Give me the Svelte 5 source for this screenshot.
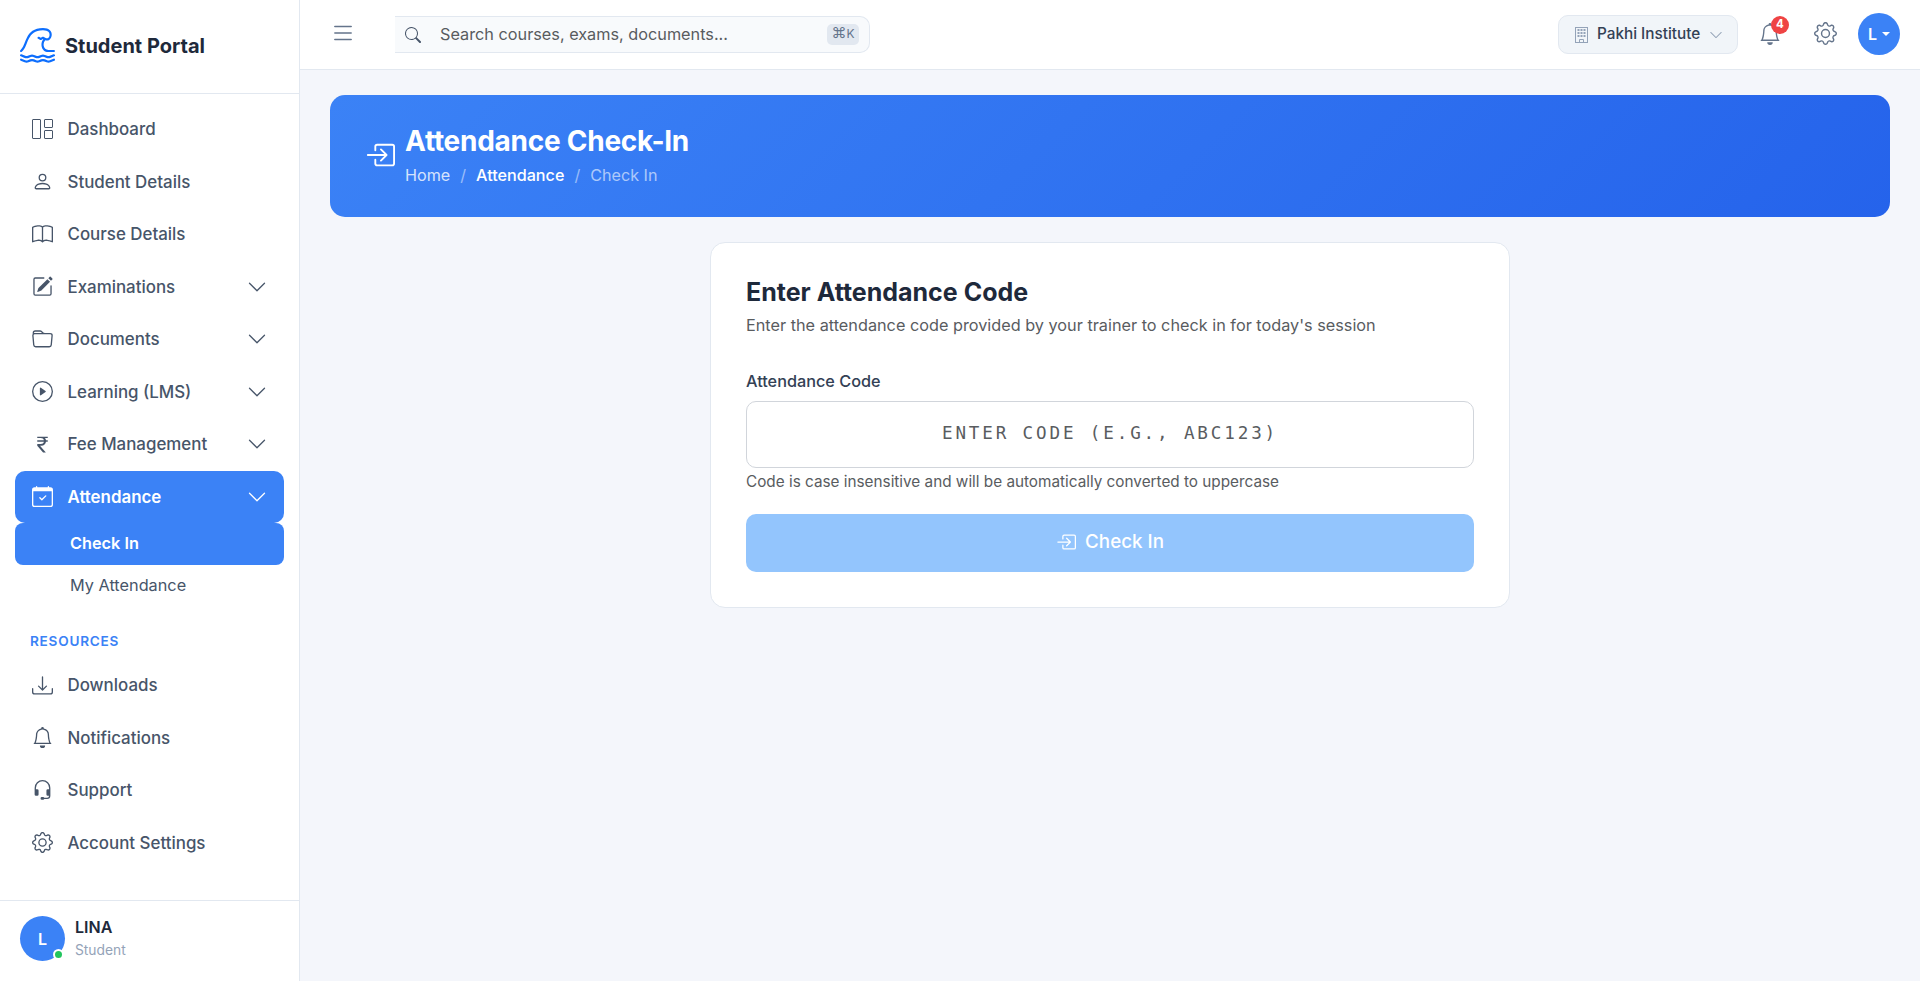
<script>
  const icons = {
    tsunami:
      "M.036 12.314a.5.5 0 0 1 .65-.278l1.757.703a1.5 1.5 0 0 0 1.114 0l1.014-.406a2.5 2.5 0 0 1 1.857 0l1.015.406a1.5 1.5 0 0 0 1.114 0l1.014-.406a2.5 2.5 0 0 1 1.857 0l1.015.406a1.5 1.5 0 0 0 1.114 0l1.757-.703a.5.5 0 1 1 .372.928l-1.758.703a2.5 2.5 0 0 1-1.857 0l-1.014-.406a1.5 1.5 0 0 0-1.114 0l-1.015.406a2.5 2.5 0 0 1-1.857 0l-1.014-.406a1.5 1.5 0 0 0-1.114 0l-1.015.406a2.5 2.5 0 0 1-1.857 0l-1.757-.703a.5.5 0 0 1-.278-.65m0 2a.5.5 0 0 1 .65-.278l1.757.703a1.5 1.5 0 0 0 1.114 0l1.014-.406a2.5 2.5 0 0 1 1.857 0l1.015.406a1.5 1.5 0 0 0 1.114 0l1.014-.406a2.5 2.5 0 0 1 1.857 0l1.015.406a1.5 1.5 0 0 0 1.114 0l1.757-.703a.5.5 0 1 1 .372.928l-1.758.703a2.5 2.5 0 0 1-1.857 0l-1.014-.406a1.5 1.5 0 0 0-1.114 0l-1.015.406a2.5 2.5 0 0 1-1.857 0l-1.014-.406a1.5 1.5 0 0 0-1.114 0l-1.015.406a2.5 2.5 0 0 1-1.857 0l-1.757-.703a.5.5 0 0 1-.278-.65M2.662 8.08c-.456 1.063-.994 2.098-1.842 2.804a.5.5 0 0 1-.64-.768c.652-.544 1.114-1.384 1.564-2.43.14-.328.281-.68.427-1.044.302-.754.624-1.559 1.01-2.308C3.763 3.2 4.528 2.105 5.7 1.299 6.877.49 8.418 0 10.5 0c1.463 0 2.511.4 3.179 1.058.67.66.893 1.518.819 2.302-.074.771-.441 1.516-1.02 1.965a1.88 1.88 0 0 1-1.904.27c-.65.642-.907 1.679-.71 2.614C11.076 9.215 11.784 10 13 10h2.5a.5.5 0 0 1 0 1H13c-1.784 0-2.826-1.215-3.114-2.585-.232-1.1.005-2.373.758-3.284L10.5 5.06l-.777.388a.5.5 0 0 1-.447 0l-1-.5a.5.5 0 0 1 .447-.894l.777.388.776-.388a.5.5 0 0 1 .447 0l1 .5.034.018c.44.264.81.195 1.108-.036.328-.255.586-.729.637-1.27.05-.529-.1-1.076-.525-1.495s-1.19-.77-2.477-.77c-1.918 0-3.252.448-4.232 1.123C5.283 2.8 4.61 3.738 4.07 4.79c-.365.71-.655 1.433-.945 2.16-.15.376-.301.753-.463 1.13",
    person:
      "M8 8a3 3 0 1 0 0-6 3 3 0 0 0 0 6m2-3a2 2 0 1 1-4 0 2 2 0 0 1 4 0m4 8c0 1-1 1-1 1H3s-1 0-1-1 1-4 6-4 6 3 6 4m-1-.004c-.001-.246-.154-.986-.832-1.664C11.516 10.68 10.289 10 8 10s-3.516.68-4.168 1.332c-.678.678-.83 1.418-.832 1.664z",
    book: "M1 2.828c.885-.37 2.154-.769 3.388-.893 1.33-.134 2.458.063 3.112.752v9.746c-.935-.53-2.12-.603-3.213-.493-1.18.12-2.37.461-3.287.811zm7.5-.141c.654-.689 1.782-.886 3.112-.752 1.234.124 2.503.523 3.388.893v9.923c-.918-.35-2.107-.692-3.287-.81-1.094-.111-2.278-.039-3.213.492zM8 1.783C7.015.936 5.587.81 4.287.94c-1.514.153-3.042.672-3.994 1.105A.5.5 0 0 0 0 2.5v11a.5.5 0 0 0 .707.455c.882-.4 2.303-.881 3.68-1.02 1.409-.142 2.59.087 3.223.877a.5.5 0 0 0 .78 0c.633-.79 1.814-1.019 3.222-.877 1.378.139 2.8.62 3.681 1.02A.5.5 0 0 0 16 13.5v-11a.5.5 0 0 0-.293-.455c-.952-.433-2.48-.952-3.994-1.105C10.413.809 8.985.936 8 1.783",
    pencil:
      "M15.502 1.94a.5.5 0 0 1 0 .706L14.459 3.69l-2-2L13.502.646a.5.5 0 0 1 .707 0l1.293 1.293zm-1.75 2.456-2-2L4.939 9.21a.5.5 0 0 0-.121.196l-.805 2.414a.25.25 0 0 0 .316.316l2.414-.805a.5.5 0 0 0 .196-.12l6.813-6.814zM1 13.5A1.5 1.5 0 0 0 2.5 15h11a1.5 1.5 0 0 0 1.5-1.5v-6a.5.5 0 0 0-1 0v6a.5.5 0 0 1-.5.5h-11a.5.5 0 0 1-.5-.5v-11a.5.5 0 0 1 .5-.5H9a.5.5 0 0 0 0-1H2.5A1.5 1.5 0 0 0 1 2.5z",
    folder:
      "M.54 3.87.5 3a2 2 0 0 1 2-2h3.672a2 2 0 0 1 1.414.586l.828.828A2 2 0 0 0 9.828 3h3.982a2 2 0 0 1 1.992 2.181l-.637 7A2 2 0 0 1 13.174 14H2.826a2 2 0 0 1-1.991-1.819l-.637-7a2 2 0 0 1 .342-1.31zM2.19 4a1 1 0 0 0-.996 1.09l.637 7a1 1 0 0 0 .995.91h10.348a1 1 0 0 0 .995-.91l.637-7A1 1 0 0 0 13.81 4zm4.69-1.707A1 1 0 0 0 6.172 2H2.5a1 1 0 0 0-1 .981l.006.139q.323-.119.684-.12h5.396z",
    play: "M8 15A7 7 0 1 1 8 1a7 7 0 0 1 0 14m0 1A8 8 0 1 0 8 0a8 8 0 0 0 0 16M6.271 5.055a.5.5 0 0 1 .52.038l3.5 2.5a.5.5 0 0 1 0 .814l-3.5 2.5A.5.5 0 0 1 6 10.5v-5a.5.5 0 0 1 .271-.445",
    rupee:
      "M4 3.06h2.726c1.22 0 2.12.575 2.325 1.724H4v1.051h5.051C8.855 7.001 8 7.558 6.788 7.558H4v1.317L8.437 14h2.11L6.095 8.884h.855c2.316-.018 3.465-1.476 3.688-3.049H12V4.784h-1.345c-.08-.778-.357-1.335-.793-1.732H12V2H4z",
    calendar:
      "M10.854 7.146a.5.5 0 0 1 0 .708l-3 3a.5.5 0 0 1-.708 0l-1.5-1.5a.5.5 0 1 1 .708-.708L7.5 9.793l2.646-2.647a.5.5 0 0 1 .708 0M3.5 0a.5.5 0 0 1 .5.5V1h8V.5a.5.5 0 0 1 1 0V1h1a2 2 0 0 1 2 2v11a2 2 0 0 1-2 2H2a2 2 0 0 1-2-2V3a2 2 0 0 1 2-2h1V.5a.5.5 0 0 1 .5-.5M1 4v10a1 1 0 0 0 1 1h12a1 1 0 0 0 1-1V4z",
    download:
      "M.5 9.9a.5.5 0 0 1 .5.5v2.5a1 1 0 0 0 1 1h12a1 1 0 0 0 1-1v-2.5a.5.5 0 0 1 1 0v2.5a2 2 0 0 1-2 2H2a2 2 0 0 1-2-2v-2.5a.5.5 0 0 1 .5-.5M7.646 11.854a.5.5 0 0 0 .708 0l3-3a.5.5 0 0 0-.708-.708L8.5 10.293V1.5a.5.5 0 0 0-1 0v8.793L5.354 8.146a.5.5 0 1 0-.708.708z",
    bell: "M8 16a2 2 0 0 0 2-2H6a2 2 0 0 0 2 2M8 1.918l-.797.161A4 4 0 0 0 4 6c0 .628-.134 2.197-.459 3.742-.16.767-.376 1.566-.663 2.258h10.244c-.287-.692-.502-1.49-.663-2.258C12.134 8.197 12 6.628 12 6a4 4 0 0 0-3.203-3.92zM14.22 12c.223.447.481.801.78 1H1c.299-.199.557-.553.78-1C2.68 10.2 3 6.88 3 6c0-2.42 1.72-4.44 4.005-4.901a1 1 0 1 1 1.99 0A5 5 0 0 1 13 6c0 .88.32 4.2 1.22 6",
    headset:
      "M8 1a5 5 0 0 0-5 5v1h1a1 1 0 0 1 1 1v3a1 1 0 0 1-1 1H3a1 1 0 0 1-1-1V6a6 6 0 1 1 12 0v6a2.5 2.5 0 0 1-2.5 2.5H9.366a1 1 0 0 1-.866.5h-1a1 1 0 1 1 0-2h1a1 1 0 0 1 .866.5H11.5A1.5 1.5 0 0 0 13 12h-1a1 1 0 0 1-1-1V8a1 1 0 0 1 1-1h1V6a5 5 0 0 0-5-5",
    gear: "M8 4.754a3.246 3.246 0 1 0 0 6.492 3.246 3.246 0 0 0 0-6.492M5.754 8a2.246 2.246 0 1 1 4.492 0 2.246 2.246 0 0 1-4.492 0M9.796 1.343c-.527-1.79-3.065-1.79-3.592 0l-.094.319a.873.873 0 0 1-1.255.52l-.292-.16c-1.64-.892-3.433.902-2.54 2.541l.159.292a.873.873 0 0 1-.52 1.255l-.319.094c-1.79.527-1.79 3.065 0 3.592l.319.094a.873.873 0 0 1 .52 1.255l-.16.292c-.892 1.64.901 3.434 2.541 2.54l.292-.159a.873.873 0 0 1 1.255.52l.094.319c.527 1.79 3.065 1.79 3.592 0l.094-.319a.873.873 0 0 1 1.255-.52l.292.16c1.64.893 3.434-.902 2.54-2.541l-.159-.292a.873.873 0 0 1 .52-1.255l.319-.094c1.79-.527 1.79-3.065 0-3.592l-.319-.094a.873.873 0 0 1-.52-1.255l.16-.292c.893-1.64-.902-3.433-2.541-2.54l-.292.159a.873.873 0 0 1-1.255-.52zm-2.633.283c.246-.835 1.428-.835 1.674 0l.094.319a1.873 1.873 0 0 0 2.693 1.115l.291-.16c.764-.415 1.6.42 1.184 1.185l-.159.292a1.873 1.873 0 0 0 1.116 2.692l.318.094c.835.246.835 1.428 0 1.674l-.319.094a1.873 1.873 0 0 0-1.115 2.693l.16.291c.415.764-.42 1.6-1.185 1.184l-.291-.159a1.873 1.873 0 0 0-2.693 1.116l-.094.318c-.246.835-1.428.835-1.674 0l-.094-.319a1.873 1.873 0 0 0-2.692-1.115l-.292.16c-.764.415-1.6-.42-1.184-1.185l.159-.291A1.873 1.873 0 0 0 1.945 8.93l-.319-.094c-.835-.246-.835-1.428 0-1.674l.319-.094A1.873 1.873 0 0 0 3.06 4.377l-.16-.292c-.415-.764.42-1.6 1.185-1.184l.292.159a1.873 1.873 0 0 0 2.692-1.115z",
    chevron:
      "M1.646 4.646a.5.5 0 0 1 .708 0L8 10.293l5.646-5.647a.5.5 0 0 1 .708.708l-6 6a.5.5 0 0 1-.708 0l-6-6a.5.5 0 0 1 0-.708",
    list: "M2.5 12a.5.5 0 0 1 .5-.5h10a.5.5 0 0 1 0 1H3a.5.5 0 0 1-.5-.5m0-4a.5.5 0 0 1 .5-.5h10a.5.5 0 0 1 0 1H3a.5.5 0 0 1-.5-.5m0-4a.5.5 0 0 1 .5-.5h10a.5.5 0 0 1 0 1H3a.5.5 0 0 1-.5-.5",
    search:
      "M11.742 10.344a6.5 6.5 0 1 0-1.397 1.398h-.001q.044.06.098.115l3.85 3.85a1 1 0 0 0 1.415-1.414l-3.85-3.85a1 1 0 0 0-.115-.1zM12 6.5a5.5 5.5 0 1 1-11 0 5.5 5.5 0 0 1 11 0",
    enter:
      "M6 3.5a.5.5 0 0 1 .5-.5h8a.5.5 0 0 1 .5.5v9a.5.5 0 0 1-.5.5h-8a.5.5 0 0 1-.5-.5v-2a.5.5 0 0 0-1 0v2A1.5 1.5 0 0 0 6.5 14h8a1.5 1.5 0 0 0 1.5-1.5v-9A1.5 1.5 0 0 0 14.5 2h-8A1.5 1.5 0 0 0 5 3.5v2a.5.5 0 0 0 1 0zM11.854 8.354a.5.5 0 0 0 0-.708l-3-3a.5.5 0 1 0-.708.708L10.293 7.5H1.5a.5.5 0 0 0 0 1h8.793l-2.147 2.146a.5.5 0 0 0 .708.708z",
  };

  const mainLinks = [
    { label: "Dashboard", icon: "dashboard" },
    { label: "Student Details", icon: "person" },
    { label: "Course Details", icon: "book" },
    { label: "Examinations", icon: "pencil", expandable: true },
    { label: "Documents", icon: "folder", expandable: true },
    { label: "Learning (LMS)", icon: "play", expandable: true },
    { label: "Fee Management", icon: "rupee", expandable: true },
    { label: "Attendance", icon: "calendar", expandable: true, active: true },
  ];

  const resourceLinks = [
    { label: "Downloads", icon: "download" },
    { label: "Notifications", icon: "bell" },
    { label: "Support", icon: "headset" },
    { label: "Account Settings", icon: "gear" },
  ];

  let code = $state("");
</script>

{#snippet icon(name, size)}
  <svg width={size} height={size} viewBox="0 0 16 16" fill="currentColor" aria-hidden="true">
    <path d={icons[name]} />
  </svg>
{/snippet}

{#snippet navLink(link)}
  <button class="nav-link" class:active={link.active}>
    {#if link.icon == "dashboard"}
      <svg width="21" height="20" viewBox="0 0 21 20" fill="none" stroke="currentColor">
        <rect x="0.5" y="0.5" width="8" height="19" rx="0.5" />
        <rect x="12.5" y="0.5" width="8" height="8" rx="0.5" />
        <rect x="12.5" y="11.5" width="8" height="8" rx="0.5" />
      </svg>
    {:else}
      {@render icon(link.icon, 21)}
    {/if}
    <span>{link.label}</span>
    {#if link.expandable}
      <i class="arrow">{@render icon("chevron", 20)}</i>
    {/if}
  </button>
{/snippet}

<div class="layout">
  <aside class="sidebar">
    <div class="brand">
      {@render icon("tsunami", 35)}
      <span>Student Portal</span>
    </div>

    <nav>
      {#each mainLinks as link}
        {@render navLink(link)}
      {/each}
      <button class="sub-link active">Check In</button>
      <button class="sub-link">My Attendance</button>

      <div class="section">RESOURCES</div>
      {#each resourceLinks as link}
        {@render navLink(link)}
      {/each}
    </nav>

    <div class="profile">
      <div class="avatar">L<span class="status"></span></div>
      <div>
        <div class="name">LINA</div>
        <div class="role">Student</div>
      </div>
    </div>
  </aside>

  <div class="page">
    <header>
      <button class="icon-btn toggle" aria-label="Toggle menu">{@render icon("list", 26)}</button>
      <div class="search">
        {@render icon("search", 16)}
        <input type="text" placeholder="Search courses, exams, documents..." />
        <kbd><span>⌘</span>K</kbd>
      </div>
      <div class="actions">
        <button class="institute">
          <svg width="13" height="16" viewBox="0 0 13 16" fill="none" stroke="currentColor">
            <rect x="0.5" y="0.5" width="12" height="15" />
            <path d="M2.5 3h2m1 0h2m1 0h2M2.5 6h2m1 0h2m1 0h2M2.5 9h2m1 0h2m1 0h2" stroke-width="2" />
            <path d="M4.5 15.5v-3h4v3" />
          </svg>
          <span>Pakhi Institute</span>
          {@render icon("chevron", 14)}
        </button>
        <button class="icon-btn bell" aria-label="Notifications">
          {@render icon("bell", 22)}
          <span class="badge">4</span>
        </button>
        <button class="icon-btn gear" aria-label="Settings">{@render icon("gear", 23)}</button>
        <button class="user">L<span class="caret"></span></button>
      </div>
    </header>

    <main>
      <section class="banner">
        {@render icon("enter", 30)}
        <div>
          <h1>Attendance Check-In</h1>
          <div class="crumbs">
            <span class="home">Home</span>
            <span class="slash">/</span>
            <span class="parent">Attendance</span>
            <span class="slash">/</span>
            <span class="current">Check In</span>
          </div>
        </div>
      </section>

      <section class="card">
        <h2>Enter Attendance Code</h2>
        <p class="intro">Enter the attendance code provided by your trainer to check in for today's session</p>
        <label for="code">Attendance Code</label>
        <input id="code" type="text" placeholder="Enter code (e.g., ABC123)" bind:value={code} />
        <p class="hint">Code is case insensitive and will be automatically converted to uppercase</p>
        <button class="submit" disabled={!code}>
          {@render icon("enter", 20)}
          <span>Check In</span>
        </button>
      </section>
    </main>
  </div>
</div>

<style>
  :global(body) {
    background: #f4f6fb;
    overflow: hidden;
  }

  * {
    box-sizing: border-box;
  }

  .layout {
    display: flex;
    height: 100vh;
    font-family: Inter, "Liberation Sans", sans-serif;
    font-size: 16px;
    line-height: 24px;
    color: #1e293b;
  }

  button,
  input {
    font: inherit;
    border: none;
    margin: 0;
  }

  button {
    background: none;
    color: inherit;
  }

  svg {
    display: block;
    flex: none;
  }

  .sidebar {
    width: 300px;
    flex: none;
    display: flex;
    flex-direction: column;
    background: white;
    border-right: 1px solid #e2e8f0;
  }

  .brand {
    height: 94px;
    flex: none;
    display: flex;
    align-items: center;
    gap: 10px;
    padding: 0 20px 3px;
    border-bottom: 1px solid #e2e8f0;
    color: #0d6efd;
  }

  .brand span {
    padding-top: 2px;
    font-size: 20px;
    font-weight: 700;
    color: #1e293b;
  }

  nav {
    flex: 1;
    padding: 9px 15px 0;
  }

  .nav-link {
    width: 100%;
    height: 52.5px;
    display: flex;
    align-items: center;
    gap: 14.5px;
    padding: 0 17px;
    border-radius: 10px;
    font-size: 16.9px;
    font-weight: 500;
    color: #475569;
  }

  .arrow {
    margin-left: auto;
  }

  .nav-link.active,
  .sub-link.active {
    background: #3b82f6;
    color: white;
    font-weight: 600;
  }

  .sub-link {
    display: block;
    width: 100%;
    height: 41.5px;
    padding: 0 0 1px 55px;
    border-radius: 8px;
    font-size: 16.3px;
    text-align: left;
    color: #475569;
  }

  .section {
    padding: 25px 15px 7px;
    line-height: 21px;
    font-size: 13.6px;
    font-weight: 600;
    letter-spacing: 0.75px;
    color: #3b82f6;
  }

  .profile {
    height: 81px;
    display: flex;
    gap: 10px;
    padding: 15px 20px;
    border-top: 1px solid #e2e8f0;
  }

  .avatar {
    position: relative;
    width: 45px;
    height: 45px;
    border-radius: 50%;
    background: #3b82f6;
    color: white;
    font-weight: 600;
    text-align: center;
    line-height: 46px;
  }

  .status {
    position: absolute;
    right: 1px;
    bottom: 1px;
    width: 11px;
    height: 11px;
    border-radius: 50%;
    border: 2px solid white;
    background: #22c55e;
  }

  .name {
    line-height: 23px;
    font-weight: 600;
  }

  .role {
    font-size: 13.8px;
    line-height: 22px;
    color: #94a3b8;
  }

  .page {
    flex: 1;
    min-width: 0;
  }

  header {
    height: 70px;
    display: flex;
    align-items: center;
    padding: 0 20px 0 30px;
    background: white;
    border-bottom: 1px solid #e2e8f0;
  }

  .icon-btn {
    display: flex;
    padding: 0;
    color: #64748b;
  }

  .toggle {
    width: 65px;
    padding-bottom: 3px;
  }

  .search {
    display: flex;
    align-items: center;
    width: 475px;
    height: 37px;
    padding: 0 10px;
    background: #f8fafc;
    border: 1px solid #e2e8f0;
    border-left: none;
    border-radius: 0 10px 10px 0;
    color: #475569;
  }

  .search input {
    flex: 1;
    margin-left: 19px;
    padding: 0 0 2px;
    background: none;
    outline: none;
    font-size: 16.25px;
  }

  .search input::placeholder {
    color: #595c5f;
    opacity: 1;
  }

  kbd {
    display: flex;
    justify-content: center;
    width: 32px;
    height: 21px;
    border-radius: 5px;
    background: #e2e8f0;
    color: #64748b;
    font: 12px/20px Inter, sans-serif;
  }

  kbd span {
    font-size: 15px;
    line-height: 18px;
  }

  .actions {
    margin-left: auto;
    display: flex;
    align-items: center;
  }

  .institute {
    display: flex;
    align-items: center;
    width: 180px;
    height: 39px;
    padding: 0 15px 0 16px;
    gap: 9px;
    background: #f1f5f9;
    border: 1px solid #e2e8f0;
    border-radius: 10px;
    font-size: 15.3px;
    font-weight: 500;
    color: #94a3b8;
  }

  .institute span {
    flex: 1;
    padding-bottom: 1px;
    text-align: left;
    color: #334155;
    white-space: nowrap;
  }

  .bell {
    position: relative;
    margin-left: 21px;
    padding-bottom: 1px;
  }

  .badge {
    position: absolute;
    left: 12px;
    top: -7px;
    width: 18px;
    height: 18px;
    border-radius: 50%;
    background: #ef4444;
    color: white;
    font-size: 11.5px;
    font-weight: 700;
    line-height: 17px;
  }

  .gear {
    margin-left: 33px;
    padding-bottom: 2px;
  }

  .user {
    display: flex;
    align-items: center;
    justify-content: center;
    gap: 5px;
    width: 42px;
    height: 42px;
    margin: 0 0 1px 21px;
    padding: 0;
    border-radius: 50%;
    background: #3b82f6;
    color: white;
    font-weight: 600;
  }

  .caret {
    border: 4px solid transparent;
    border-top-color: white;
    border-bottom: none;
  }

  main {
    padding: 25px 30px;
  }

  .banner {
    height: 122px;
    display: flex;
    align-items: center;
    gap: 10px;
    padding: 0 35px 2px;
    border-radius: 15px;
    background: linear-gradient(135deg, #3b82f6, #2563eb);
    color: white;
  }

  h1 {
    margin: 0;
    font-size: 28px;
    line-height: 34px;
    font-weight: 700;
    letter-spacing: -0.26px;
  }

  .crumbs {
    display: flex;
    gap: 10px;
    margin-top: 4px;
    padding-top: 1px;
    font-size: 16.15px;
  }

  .home {
    color: rgba(255, 255, 255, 0.8);
  }

  .slash {
    color: rgba(255, 255, 255, 0.5);
  }

  .parent {
    font-weight: 500;
  }

  .current {
    color: rgba(255, 255, 255, 0.6);
  }

  .card {
    width: 800px;
    height: 366px;
    margin: 25px auto 0;
    padding: 35px;
    background: white;
    border: 1px solid #e2e8f0;
    border-radius: 15px;
  }

  h2 {
    margin: 0;
    font-size: 25px;
    line-height: 29px;
    font-weight: 700;
  }

  p {
    margin: 0;
    color: #595c5f;
  }

  .intro {
    margin-top: 6px;
    font-size: 16.25px;
  }

  label {
    display: block;
    margin-top: 32px;
    font-size: 16.25px;
    font-weight: 500;
    color: #334155;
  }

  .card input {
    display: block;
    width: 100%;
    height: 67px;
    margin-top: 8px;
    padding: 0 2px 3px;
    border: 1px solid #d1d5db;
    border-radius: 10px;
    font-family: "DejaVu Sans Mono", monospace;
    font-size: 17.6px;
    letter-spacing: 2.85px;
    text-align: center;
    text-transform: uppercase;
  }

  .card input::placeholder {
    color: #595c5f;
    opacity: 1;
  }

  .hint {
    margin-top: 2px;
    font-size: 15.3px;
  }

  .submit {
    display: flex;
    align-items: center;
    justify-content: center;
    gap: 9px;
    width: 100%;
    height: 58px;
    margin-top: 20px;
    padding-bottom: 3px;
    border-radius: 10px;
    background: #3b82f6;
    color: white;
    font-size: 18.8px;
    font-weight: 500;
  }

  .submit:disabled {
    background: #93c5fd;
  }
</style>
